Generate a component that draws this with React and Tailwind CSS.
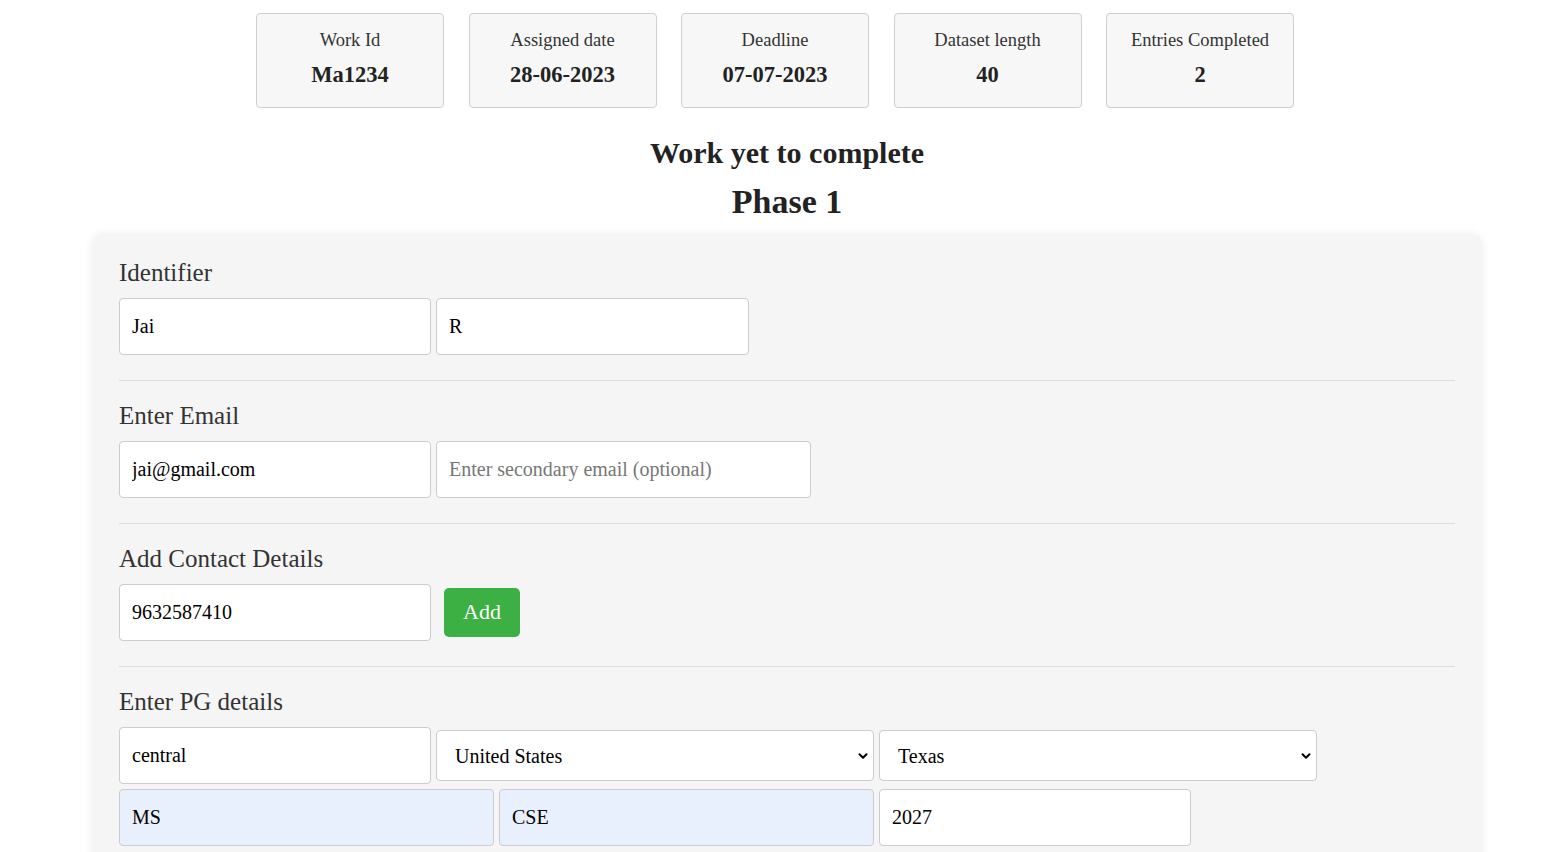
import { ChevronDown } from "lucide-react";

const stats = [
  { label: "Work Id", value: "Ma1234" },
  { label: "Assigned date", value: "28-06-2023" },
  { label: "Deadline", value: "07-07-2023" },
  { label: "Dataset length", value: "40" },
  { label: "Entries Completed", value: "2" },
];

const baseInput =
  "h-[57px] rounded-[4px] border border-[#cccccc] px-[12px] text-[20px] text-black outline-none placeholder:text-[#777777]";
const inputCls = `${baseInput} bg-white`;
const filledCls = `${baseInput} bg-[#e8f0fe]`;

const Section = ({ title, children, last }) => (
  <div>
    <h3 className="text-[25px] leading-[28px] text-[#333333] mb-[11px]">{title}</h3>
    {children}
    {!last && <hr className="mt-[25px] mb-[21px] border-t border-[#dddddd]" />}
  </div>
);

const Select = ({ value, options }) => (
  <div className="relative w-[438px] h-[51px]">
    <select
      defaultValue={value}
      className="w-full h-full appearance-none rounded-[4px] border border-[#cccccc] bg-white pl-[18px] pr-[30px] text-[20px] text-black outline-none"
    >
      {options.map((o) => (
        <option key={o}>{o}</option>
      ))}
    </select>
    <ChevronDown
      className="absolute right-[4px] top-[19px] h-[14px] w-[14px] text-black pointer-events-none"
      strokeWidth={3.5}
    />
  </div>
);

export default function App() {
  return (
    <div
      className="min-h-screen bg-white text-[#222222] overflow-hidden"
      style={{ fontFamily: '"Liberation Serif", "Times New Roman", serif' }}
    >
      <div className="flex justify-center gap-[24.5px] pt-[13px] pr-[2px]">
        {stats.map((s) => (
          <div
            key={s.label}
            className="w-[188px] h-[95px] rounded-[4px] border border-[#cfcfcf] bg-[#f7f7f7] flex flex-col items-center pt-[15px]"
          >
            <span className="text-[18.5px] leading-[22px] text-[#333333]">{s.label}</span>
            <span className="mt-[11px] text-[22.5px] leading-[26px] font-bold text-[#222222]">{s.value}</span>
          </div>
        ))}
      </div>

      <div className="ml-[92px] w-[1390px]">
        <h2 className="mt-[27px] text-center text-[30px] leading-[36px] font-bold text-[#222222]">
          Work yet to complete
        </h2>
        <h1 className="mt-[11px] text-center text-[34px] leading-[40px] font-bold text-[#222222]">Phase 1</h1>

        <div className="mt-[12px] rounded-[10px] bg-[#f5f5f5] px-[27px] pt-[25px] pb-[40px] shadow-[0_0_10px_rgba(0,0,0,0.07)]">
          <Section title="Identifier">
            <div className="flex gap-[5px]">
              <input className={`${inputCls} w-[312px]`} defaultValue="Jai" />
              <input className={`${inputCls} w-[313px]`} defaultValue="R" />
            </div>
          </Section>

          <Section title="Enter Email">
            <div className="flex gap-[5px]">
              <input className={`${inputCls} w-[312px]`} defaultValue="jai@gmail.com" />
              <input className={`${inputCls} w-[375px]`} placeholder="Enter secondary email (optional)" />
            </div>
          </Section>

          <Section title="Add Contact Details">
            <div className="flex items-center gap-[13px]">
              <input className={`${inputCls} w-[312px]`} defaultValue="9632587410" />
              <button className="w-[76px] h-[49px] rounded-[5px] bg-[#3cb043] pb-[3px] text-white text-[22px]">
                Add
              </button>
            </div>
          </Section>

          <Section title="Enter PG details" last>
            <div className="flex items-center gap-[5px]">
              <input className={`${inputCls} w-[312px]`} defaultValue="central" />
              <Select value="United States" options={["United States", "India", "Canada"]} />
              <Select value="Texas" options={["Texas", "California", "New York"]} />
            </div>
            <div className="flex gap-[5px] mt-[5px]">
              <input className={`${filledCls} w-[375px]`} defaultValue="MS" />
              <input className={`${filledCls} w-[375px]`} defaultValue="CSE" />
              <input className={`${inputCls} w-[312px]`} defaultValue="2027" />
            </div>
          </Section>
        </div>
      </div>
    </div>
  );
}
